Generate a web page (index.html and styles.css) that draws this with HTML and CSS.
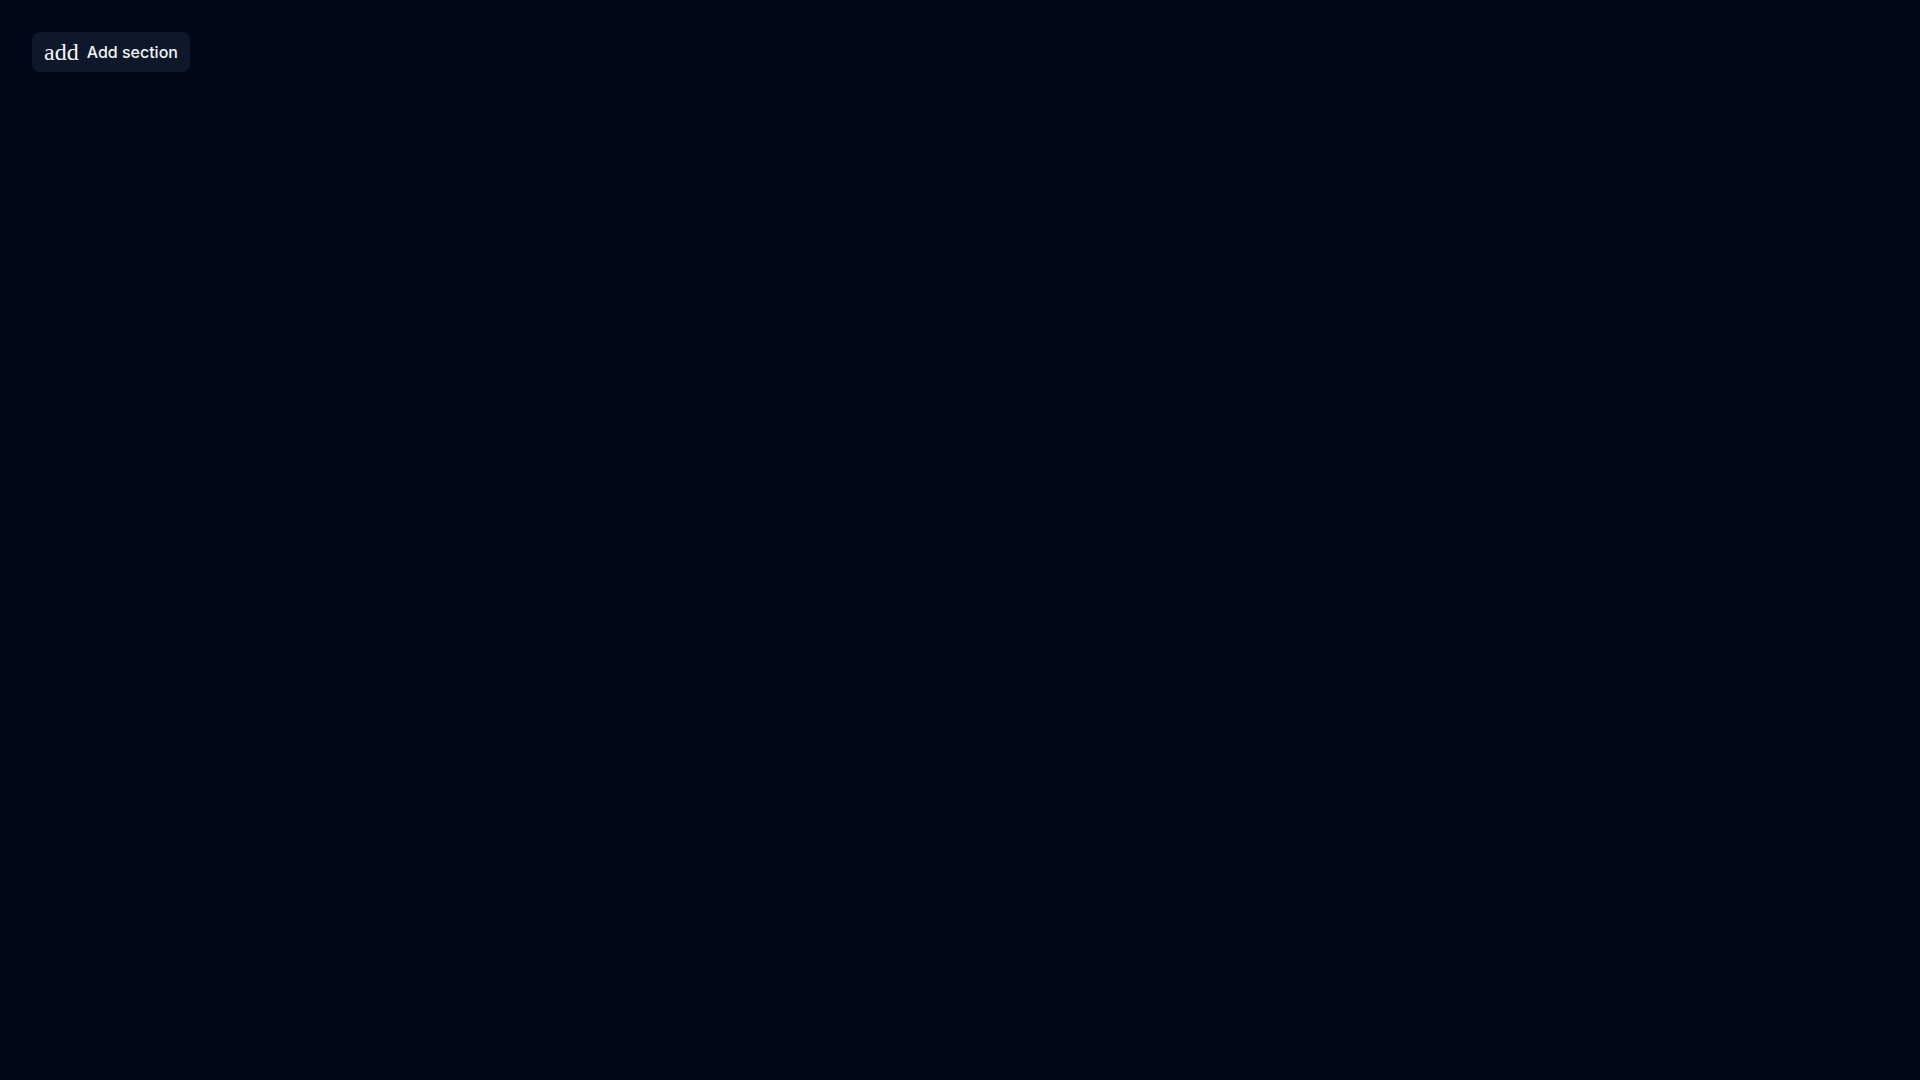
FILE: index.html
```html
<!DOCTYPE html>
<html lang="en">
<head>
    <meta charset="UTF-8">
    <meta name="viewport" content="width=device-width, initial-scale=1.0">
    <title>Sections</title>
    <link rel="stylesheet" href="styles.css">
</head>
<body>
    <main class="sections">
        <button type="button" class="add-button">
            <span class="icon">add</span>
            <span>Add section</span>
        </button>
    </main>
</body>
</html>
```

FILE: styles.css
```css
* {
  box-sizing: border-box;
}

body {
  margin: 0;
  min-height: 100vh;
  background-color: #020617;
  color: #f1f5f9;
  font-family: Inter, sans-serif;
}

.sections {
  display: flex;
  flex-direction: column;
  align-items: flex-start;
  padding: 32px;
}

.add-button {
  display: flex;
  align-items: center;
  gap: 8px;
  height: 40px;
  padding: 0 12px;
  border: none;
  border-radius: 8px;
  background-color: #0f172a;
  color: inherit;
  font-family: inherit;
  font-size: 16px;
  font-weight: 500;
  line-height: 24px;
  cursor: pointer;
}

.add-button:hover {
  background-color: #1e293b;
}

.icon {
  font-family: "Liberation Serif", serif;
  font-size: 24px;
  font-weight: 400;
  line-height: 24px;
}
```
